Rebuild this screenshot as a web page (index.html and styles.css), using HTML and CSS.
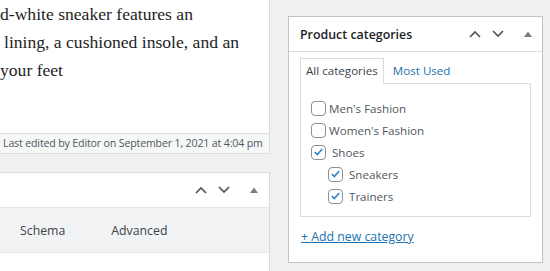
FILE: index.html
```html
<!DOCTYPE html>
<html>
<head>
<meta charset="utf-8">
<link rel="stylesheet" href="styles.css">
</head>
<body>
<div class="page">
  <div class="main-col">
    <div class="editor">
      <p class="line">d-white sneaker features an</p>
      <p class="line line-2">lining, a cushioned insole, and an</p>
      <p class="line">your feet</p>
    </div>
    <div class="status">Last edited by Editor on September 1, 2021 at 4:04 pm</div>
    <div class="seo-box">
      <div class="box-head">
        <span class="ctrl">
          <svg class="chev" viewBox="0 0 12 8" width="12" height="8"><path d="M1 7 L6 2 L11 7" fill="none" stroke="#50575e" stroke-width="1.7"/></svg>
          <svg class="chev" viewBox="0 0 12 8" width="12" height="8"><path d="M1 1 L6 6 L11 1" fill="none" stroke="#50575e" stroke-width="1.7"/></svg>
          <svg class="tri" viewBox="0 0 8 6" width="8" height="6"><path d="M0 6 L4 0.5 L8 6 Z" fill="#787c82"/></svg>
        </span>
      </div>
      <div class="seo-tabs">
        <span class="seo-tab">Schema</span>
        <span class="seo-tab">Advanced</span>
      </div>
    </div>
  </div>
  <div class="side-col">
    <div class="cat-box">
      <div class="cat-head">
        <h2 class="cat-title">Product categories</h2>
        <span class="ctrl">
          <svg class="chev" viewBox="0 0 12 8" width="12" height="8"><path d="M1 7 L6 2 L11 7" fill="none" stroke="#50575e" stroke-width="1.7"/></svg>
          <svg class="chev" viewBox="0 0 12 8" width="12" height="8"><path d="M1 1 L6 6 L11 1" fill="none" stroke="#50575e" stroke-width="1.7"/></svg>
          <svg class="tri" viewBox="0 0 8 6" width="8" height="6"><path d="M0 6 L4 0.5 L8 6 Z" fill="#787c82"/></svg>
        </span>
      </div>
      <div class="cat-inside">
        <div class="cat-tabs">
          <span class="cat-tab active">All categories</span>
          <span class="cat-tab link">Most Used</span>
        </div>
        <div class="cat-panel">
          <label class="cat-row"><span class="cb"></span><span class="cat-label">Men's Fashion</span></label>
          <label class="cat-row"><span class="cb"></span><span class="cat-label">Women's Fashion</span></label>
          <label class="cat-row"><span class="cb checked"><svg viewBox="0 0 16 16" width="14" height="14"><path d="M3.5 8.2 L6.6 11.2 L12.5 4.3" fill="none" stroke="#3582c4" stroke-width="2"/></svg></span><span class="cat-label sp">Shoes</span></label>
          <label class="cat-row child"><span class="cb checked"><svg viewBox="0 0 16 16" width="14" height="14"><path d="M3.5 8.2 L6.6 11.2 L12.5 4.3" fill="none" stroke="#3582c4" stroke-width="2"/></svg></span><span class="cat-label sp">Sneakers</span></label>
          <label class="cat-row child"><span class="cb checked"><svg viewBox="0 0 16 16" width="14" height="14"><path d="M3.5 8.2 L6.6 11.2 L12.5 4.3" fill="none" stroke="#3582c4" stroke-width="2"/></svg></span><span class="cat-label sp">Trainers</span></label>
        </div>
        <a class="add-cat" href="#">+ Add new category</a>
      </div>
    </div>
  </div>
</div>
</body>
</html>
```
FILE: styles.css
```css
html, body {
  margin: 0;
  padding: 0;
  background: #f0f0f1;
  width: 550px;
  height: 271px;
  overflow: hidden;
}
.page {
  display: flex;
  gap: 18px;
  height: 271px;
  overflow: hidden;
  font-family: "Open Sans", "Noto Sans", sans-serif;
  color: #50575e;
}
.main-col {
  width: 271px;
  margin-left: -1px;
  flex: none;
  display: flex;
  flex-direction: column;
}
.editor {
  background: #fff;
  border-right: 1px solid #dcdcde;
  height: 133px;
  flex: none;
  box-sizing: border-box;
  font-family: "Liberation Serif", serif;
  font-size: 17.6px;
  color: #1e1e1e;
}
.line {
  margin: 0;
  line-height: 28px;
  padding-left: 1px;
}
.line-2 { padding-left: 5px; }
.status {
  background: #f6f7f7;
  border: 1px solid #dcdcde;
  height: 19px;
  flex: none;
  font-size: 10.6px;
  letter-spacing: -0.15px;
  white-space: nowrap;
  overflow: hidden;
  line-height: 19px;
  padding-left: 3px;
  color: #50575e;
}
.seo-box {
  margin-top: 18px;
  background: #fff;
  border: 1px solid #dcdcde;
  border-bottom: none;
  flex: 1;
}
.box-head {
  height: 34px;
  display: flex;
  align-items: center;
  justify-content: flex-end;
  padding-right: 11px;
}
.ctrl {
  display: flex;
  align-items: center;
  gap: 11px;
}
.ctrl .tri { margin-left: 9px; }
.seo-tabs {
  background: #f2f3f4;
  border-top: 1px solid #e6e6e6;
  border-bottom: 1px solid #e6e6e6;
  height: 44px;
  display: flex;
  align-items: center;
  padding-left: 20px;
  gap: 46px;
  font-size: 12.3px;
  color: #3c434a;
}
.side-col {
  padding-top: 16px;
  width: 255px;
  flex: none;
}
.cat-box {
  background: #fff;
  border: 1px solid #c3c4c7;
  height: 247px;
  box-sizing: border-box;
}
.cat-head {
  height: 34px;
  border-bottom: 1px solid #dcdcde;
  display: flex;
  align-items: center;
  padding-left: 11px;
  padding-right: 10px;
}
.cat-title {
  margin: 0;
  flex: 1;
  font-size: 12.4px;
  font-weight: 600;
  color: #1d2327;
}
.cat-inside {
  padding: 6px 11px 0 11px;
}
.cat-tabs {
  display: flex;
  align-items: flex-end;
  font-size: 11.6px;
}
.cat-tab {
  height: 24px;
  line-height: 24px;
  padding: 0 5px;
}
.cat-tab.active {
  border: 1px solid #dcdcde;
  border-bottom-color: #fff;
  margin-bottom: -1px;
  position: relative;
  color: #3c434a;
  background: #fff;
}
.cat-tab.link {
  color: #2271b1;
  padding-left: 9px;
}
.cat-panel {
  border: 1px solid #dcdcde;
  height: 134px;
  padding: 13px 0 0 10px;
  box-sizing: border-box;
}
.cat-row {
  display: flex;
  align-items: center;
  height: 22px;
  font-size: 11.6px;
  color: #50575e;
}
.cat-row.child { padding-left: 17px; }
.cb {
  width: 13px;
  height: 13px;
  border: 1px solid #8c8f94;
  border-radius: 4px;
  flex: none;
  display: flex;
  align-items: center;
  justify-content: center;
}
.cat-label { margin-left: 3px; }
.cat-label.sp { margin-left: 6px; }
.add-cat {
  display: inline-block;
  margin-top: 11px;
  margin-left: 1px;
  font-size: 12.3px;
  color: #2271b1;
  text-decoration: underline;
}
```
